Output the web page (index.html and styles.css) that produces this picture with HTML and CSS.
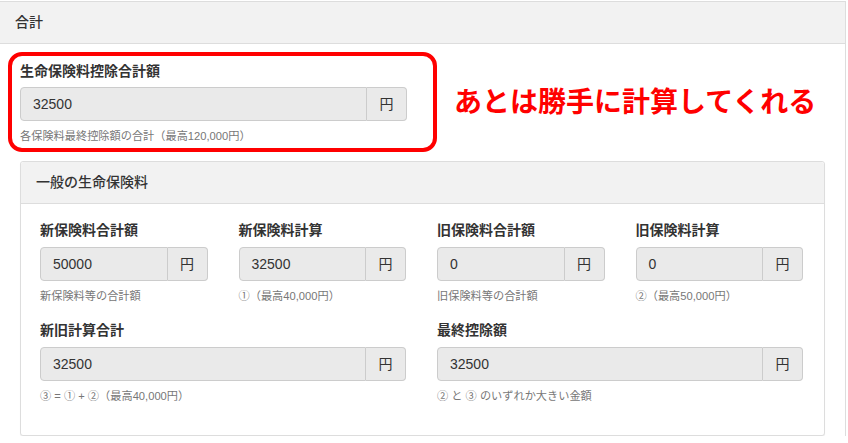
FILE: index.html
```html
<!DOCTYPE html>
<html lang="ja">
<head>
  <meta charset="UTF-8" />
  <meta name="viewport" content="width=device-width, initial-scale=1.0"/>
  <title>生命保険料控除 - 合計</title>
  <link rel="stylesheet" href="styles.css">
</head>
<body>

  <div class="panel">
    <div class="panel-heading">合計</div>
    <div class="panel-body">

      <div class="row two">
        <div class="form-group">
          <label>生命保険料控除合計額</label>
          <div class="input-group">
            <div class="form-control">32500</div>
            <span class="addon">円</span>
          </div>
          <p class="help">各保険料最終控除額の合計（最高120,000円）</p>
        </div>
      </div>

      <div class="panel sub">
        <div class="panel-heading">一般の生命保険料</div>
        <div class="panel-body">
          <div class="row four">
            <div class="form-group">
              <label>新保険料合計額</label>
              <div class="input-group">
                <div class="form-control">50000</div>
                <span class="addon">円</span>
              </div>
              <p class="help">新保険料等の合計額</p>
            </div>
            <div class="form-group">
              <label>新保険料計算</label>
              <div class="input-group">
                <div class="form-control">32500</div>
                <span class="addon">円</span>
              </div>
              <p class="help">①（最高40,000円）</p>
            </div>
            <div class="form-group">
              <label>旧保険料合計額</label>
              <div class="input-group">
                <div class="form-control">0</div>
                <span class="addon">円</span>
              </div>
              <p class="help">旧保険料等の合計額</p>
            </div>
            <div class="form-group">
              <label>旧保険料計算</label>
              <div class="input-group">
                <div class="form-control">0</div>
                <span class="addon">円</span>
              </div>
              <p class="help">②（最高50,000円）</p>
            </div>
          </div>

          <div class="row two">
            <div class="form-group">
              <label>新旧計算合計</label>
              <div class="input-group">
                <div class="form-control">32500</div>
                <span class="addon">円</span>
              </div>
              <p class="help">③ = ① + ②（最高40,000円）</p>
            </div>
            <div class="form-group">
              <label>最終控除額</label>
              <div class="input-group">
                <div class="form-control">32500</div>
                <span class="addon">円</span>
              </div>
              <p class="help">② と ③ のいずれか大きい金額</p>
            </div>
          </div>
        </div>
      </div>

    </div>
  </div>

  <!-- annotation -->
  <div class="mark-box"></div>
  <div class="mark-text">あとは勝手に計算してくれる</div>

</body>
</html>
```

FILE: styles.css
```css
body {
  font-family: "Liberation Sans", "Noto Sans CJK JP", sans-serif;
  font-size: 14px;
  color: #333;
  margin: 0;
  padding: 1px 0 0 0;
  background: #fff;
  position: relative;
}

.panel {
  box-sizing: border-box;
  width: 846px;
  border: 1px solid #ddd;
  border-left: 0;
  border-bottom: 0;
  background: #fff;
}

.panel-heading {
  background: #f2f2f2;
  border-bottom: 1px solid #ddd;
  padding: 10px 15px;
  line-height: 21px;
  font-weight: 500;
}

.panel-body {
  padding: 17px 20px 0 20px;
}

.panel.sub {
  width: auto;
  border: 1px solid #ddd;
  border-radius: 3px;
  box-shadow: 0 1px 1px rgba(0,0,0,0.06);
}

.panel.sub .panel-heading {
  border-radius: 3px 3px 0 0;
}

.panel.sub .panel-body {
  padding: 16px 21px 14px 19px;
}

.row {
  display: grid;
  column-gap: 31px;
}

.row.two { grid-template-columns: repeat(2, 1fr); }
.row.four { grid-template-columns: repeat(4, 1fr); }

.form-group {
  margin-bottom: 15px;
}

.panel-body > .row.two > .form-group {
  margin-bottom: 16px;
}

label {
  display: block;
  font-weight: bold;
  line-height: 20px;
  margin-bottom: 6px;
}

.sub label {
  margin-bottom: 7px;
}

.input-group {
  display: flex;
  height: 34px;
}

.form-control {
  flex: 1;
  box-sizing: border-box;
  height: 34px;
  padding: 6px 12px;
  line-height: 20px;
  background: #eaeaea;
  border: 1px solid #ccc;
  border-radius: 4px 0 0 4px;
  color: #333;
}

.addon {
  box-sizing: border-box;
  width: 40px;
  height: 34px;
  line-height: 20px;
  padding: 6px 0;
  text-align: center;
  background: #eaeaea;
  border: 1px solid #ccc;
  border-left: 0;
  border-radius: 0 4px 4px 0;
}

.help {
  margin: 6px 0 0 0;
  font-size: 11.2px;
  line-height: 18px;
  color: #777;
}

.mark-box {
  position: absolute;
  left: 8px;
  top: 52px;
  width: 421px;
  height: 92px;
  border: 4px solid #f00;
  border-radius: 14px;
}

.mark-text {
  position: absolute;
  left: 454px;
  top: 86px;
  font-size: 28px;
  line-height: 29px;
  font-weight: bold;
  color: #f00;
  font-family: "Noto Sans CJK JP", sans-serif;
}
```
